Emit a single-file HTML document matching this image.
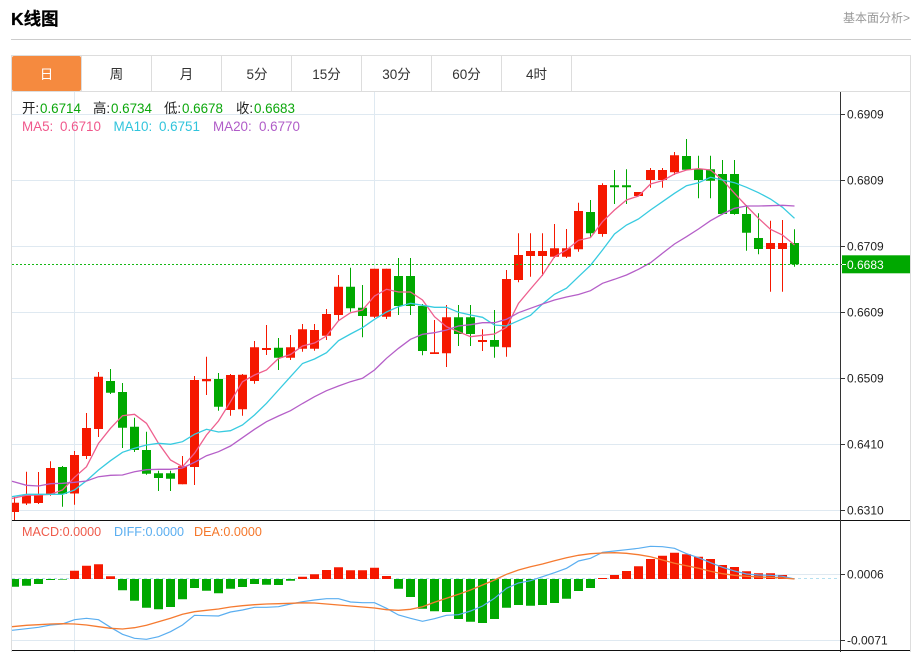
<!DOCTYPE html>
<html><head><meta charset="utf-8"><title>K线图</title>
<style>
html,body{margin:0;padding:0;background:#fff;width:915px;height:652px;overflow:hidden}
svg{display:block;position:absolute;left:0;top:0}
text{font-family:"Liberation Sans","Noto Sans CJK SC",sans-serif}
</style></head><body>
<svg width="915" height="652" viewBox="0 0 915 652" xmlns="http://www.w3.org/2000/svg">
<text x="11" y="25" font-size="17.5" font-weight="700" fill="#000" stroke="#000" stroke-width="0.25">K线图</text>
<text x="843" y="22" font-size="12" fill="#999">基本面分析&gt;</text>
<path d="M11 39.5H911" stroke="#ccc"/>
<!-- frame and tabs -->
<path d="M11.5 55V652M910.5 55V652M11 55.5H911M11 91.5H911" stroke="#ddd" fill="none"/>
<path d="M81.5 56V91M151.5 56V91M221.5 56V91M291.5 56V91M361.5 56V91M431.5 56V91M501.5 56V91M571.5 56V91" stroke="#ddd"/>
<rect x="12" y="56" width="69" height="35" rx="2" fill="#f58a3f"/>
<g font-size="13.5" fill="#333" text-anchor="middle">
<text x="46.5" y="79" fill="#fff">日</text><text x="116.5" y="79">周</text><text x="186.5" y="79">月</text><text x="257" y="79">5分</text><text x="326.5" y="79">15分</text><text x="396.5" y="79">30分</text><text x="466.5" y="79">60分</text><text x="536.5" y="79">4时</text>
</g>
<!-- grid -->
<path d="M12 114.5H841M12 180.5H841M12 246.5H841M12 312.5H841M12 378.5H841M12 444.5H841M12 510.5H841M12 574.5H841M12 640.5H841M74.5 92V652M374.5 92V652" stroke="#dfe9f1" fill="none"/>
<!-- candle wicks -->
<g stroke="#f51800" fill="none"><path d="M14.5 497V520M26.5 471.7V505M38.5 472V504M50.5 461.3V495.7M74.5 451V504.7M86.5 413V459M98.5 372V437M182.5 456V484.3M194.5 376V485M206.5 356.7V395M230.5 374V415.7M242.5 374V415.7M254.5 341V383.7M266.5 325V355M290.5 335V360M302.5 324V351.7M314.5 324V350.7M326.5 309V340M338.5 275V320.7M374.5 268.7V318M386.5 268.7V319M434.5 320V354M446.5 305V367M482.5 329.3V351M506.5 270V356.7M518.5 233.3V282.3M530.5 233.3V276.7M542.5 233.3V276M554.5 224V258M566.5 229V258M578.5 202.7V251.7M602.5 183.3V236.7M650.5 168V187.7M662.5 168V187.7M674.5 152V175M770.5 220.7V291.7M782.5 220V291.7"/></g>
<g stroke="#00a800" fill="none"><path d="M62.5 466V506.7M110.5 369V394M122.5 383V448M134.5 417.7V452M146.5 431.7V474.7M158.5 470.7V491M170.5 470.7V491M218.5 373V410.7M278.5 338V370M350.5 267.7V311.7M362.5 285V337.3M398.5 258V315M410.5 258V315M422.5 304V355.3M458.5 305V346M470.5 305V346M494.5 310V357.7M590.5 200V236.7M614.5 170V204M626.5 169.3V204M686.5 139V170M698.5 155.7V198.3M710.5 155.7V198.3M722.5 160V214.7M734.5 160V214.7M746.5 205V250.7M758.5 213.3V254.3M794.5 229.3V266.7"/></g>
<!-- candle bodies -->
<path fill="#f51800" d="M12 502.7h7V512h-7zM22 495h9V503.5h-9zM34 495h9V503h-9zM46 468h9V494h-9zM70 455h9V493.5h-9zM82 428h9V456h-9zM94 376.7h9V429h-9zM178 466.3h9V484.3h-9zM190 380h9V467h-9zM202 379h9V381.3h-9zM226 375h9V410h-9zM238 374.7h9V409.3h-9zM250 347.3h9V381h-9zM262 348h9V350h-9zM286 347.3h9V357.7h-9zM298 329.3h9V348.7h-9zM310 330h9V348.7h-9zM322 314h9V335.7h-9zM334 286.7h9V315h-9zM370 268.7h9V316.7h-9zM382 268.7h9V316.7h-9zM430 352.3h9V354h-9zM442 317.3h9V353.3h-9zM478 340h9V342h-9zM502 279h9V347.3h-9zM514 255h9V280h-9zM526 251h9V256h-9zM538 251h9V256h-9zM550 248.3h9V256.7h-9zM562 248.3h9V256.7h-9zM574 211h9V249.3h-9zM598 185h9V234h-9zM634 192h9V196h-9zM646 170h9V180h-9zM658 170h9V180h-9zM670 155.3h9V172.3h-9zM766 243h9V249h-9zM778 243h9V249h-9z"/>
<path fill="#00a800" d="M58 467h9V494h-9zM106 381h9V392.7h-9zM118 392h9V427.7h-9zM130 426.7h9V450h-9zM142 450h9V473.7h-9zM154 473.3h9V478h-9zM166 473.3h9V478.7h-9zM214 379h9V406.7h-9zM274 347.7h9V357.7h-9zM346 286.7h9V308.3h-9zM358 307.7h9V316h-9zM394 276h9V306h-9zM406 276h9V306h-9zM418 306h9V351h-9zM454 317.3h9V334h-9zM466 317.3h9V334h-9zM490 340h9V346.7h-9zM586 212h9V233.3h-9zM610 185.3h9V187.3h-9zM622 185.3h9V187.3h-9zM682 156h9V169.7h-9zM694 169.3h9V180h-9zM706 169.3h9V180.7h-9zM718 174h9V214h-9zM730 174h9V214h-9zM742 214h9V232.7h-9zM754 238h9V249h-9zM790 243h9V264.3h-9z"/>
<!-- MA lines -->
<polyline fill="none" stroke="#ee5f8e" stroke-width="1.3" points="12,498.5 26.5,495.3 38.5,495 50.5,494.3 62.5,490 74.5,477.3 86.5,466.7 98.5,443.3 110.5,428.3 122.5,415.7 134.5,414.3 146.5,423.3 158.5,443.3 170.5,460 182.5,466.7 194.5,453.3 206.5,435 218.5,421 230.5,401.7 242.5,381.7 254.5,375 266.5,370 278.5,358.5 290.5,354.5 302.5,346 314.5,343 326.5,336 338.5,320.7 350.5,312.7 362.5,310 374.5,296 386.5,289.3 398.5,292 410.5,292 422.5,300 434.5,316.7 446.5,326.7 458.5,331.7 470.5,336.7 482.5,335.3 494.5,334 506.5,327.3 518.5,303.3 530.5,289 542.5,275 554.5,256.7 566.5,250 578.5,240.3 590.5,237.6 602.5,221.7 614.5,210 626.5,200 638.5,196 650.5,184 662.5,180.7 674.5,174 686.5,170 698.5,168.7 710.5,170 722.5,180 734.5,193.3 746.5,206 758.5,218.3 770.5,229.3 782.5,235 794.5,245"/>
<polyline fill="none" stroke="#38cbe0" stroke-width="1.3" points="12,496.7 26.5,494.3 38.5,494.3 50.5,494.3 62.5,494.3 74.5,490 86.5,480.7 98.5,470 110.5,460.7 122.5,452.3 134.5,448.3 146.5,445 158.5,443.3 170.5,444.3 182.5,441.7 194.5,434.3 206.5,429.3 218.5,432 230.5,430.7 242.5,425 254.5,415 266.5,403.3 278.5,390 290.5,376.7 302.5,363.5 314.5,359 326.5,352.7 338.5,340.7 350.5,334 362.5,327.7 374.5,319.3 386.5,312 398.5,306.7 410.5,303.3 422.5,305.3 434.5,307.3 446.5,307.3 458.5,312.3 470.5,315 482.5,317.3 494.5,325 506.5,326 518.5,320.7 530.5,315.3 542.5,304 554.5,294.3 566.5,288.2 578.5,276.7 590.5,265.3 602.5,250 614.5,234 626.5,225 638.5,219 650.5,210 662.5,201.7 674.5,193.3 686.5,185.7 698.5,182.7 710.5,177.3 722.5,180 734.5,182.7 746.5,187.3 758.5,192.7 770.5,199 782.5,207.3 794.5,218.3"/>
<polyline fill="none" stroke="#b55fc8" stroke-width="1.3" points="12,481.3 26.5,485.3 38.5,486 50.5,483.7 62.5,483.3 74.5,482.3 86.5,481 98.5,476.7 110.5,475.3 122.5,475 134.5,471.7 146.5,469.7 158.5,469.3 170.5,469.3 182.5,468 194.5,462.3 206.5,455.7 218.5,451.7 230.5,446 242.5,437.7 254.5,429.3 266.5,421.7 278.5,416 290.5,410.7 302.5,403.5 314.5,396.7 326.5,390.7 338.5,386 350.5,381.7 362.5,378.3 374.5,370 386.5,358.3 398.5,348.3 410.5,339.3 422.5,334.3 434.5,332.7 446.5,330 458.5,326 470.5,324.7 482.5,322.7 494.5,322.7 506.5,319.3 518.5,312.7 530.5,308.3 542.5,304 554.5,300 566.5,297 578.5,294.5 590.5,290.7 602.5,283.3 614.5,279.3 626.5,275 638.5,269.3 650.5,262.7 662.5,253.3 674.5,244 686.5,236.7 698.5,229 710.5,220.7 722.5,214 734.5,208.3 746.5,206 758.5,206 770.5,205.7 782.5,205.3 794.5,206"/>
<!-- last price dotted -->
<path d="M12 264.5H842" stroke="#14b814" stroke-dasharray="2 2" fill="none"/>
<!-- MACD -->
<path d="M12 578.5H841" stroke="#b5e0f0" stroke-dasharray="3 3" fill="none"/>
<path fill="#00a800" d="M12 579h7V586.7h-7zM22 579h9V585.7h-9zM34 579h9V584h-9zM46 579h9V580h-9zM58 579h9V579.6h-9zM118 579h9V590.3h-9zM130 579h9V600.7h-9zM142 579h9V607.7h-9zM154 579h9V609.3h-9zM166 579h9V607h-9zM178 579h9V599.3h-9zM190 579h9V588h-9zM202 579h9V590.7h-9zM214 579h9V593.3h-9zM226 579h9V588.7h-9zM238 579h9V587h-9zM250 579h9V584h-9zM262 579h9V584.7h-9zM274 579h9V585h-9zM286 579h9V580.7h-9zM394 579h9V588.7h-9zM406 579h9V597h-9zM418 579h9V608.7h-9zM430 579h9V611.3h-9zM442 579h9V612h-9zM454 579h9V619h-9zM466 579h9V621.7h-9zM478 579h9V623h-9zM490 579h9V619h-9zM502 579h9V607.7h-9zM514 579h9V605h-9zM526 579h9V605.7h-9zM538 579h9V605h-9zM550 579h9V603h-9zM562 579h9V598.7h-9zM574 579h9V591h-9zM586 579h9V588h-9z"/>
<path fill="#f51800" d="M70 570.7h9V579h-9zM82 565.7h9V579h-9zM94 564.3h9V579h-9zM106 576.3h9V579h-9zM298 576.7h9V579h-9zM310 574.3h9V579h-9zM322 570h9V579h-9zM334 567.3h9V579h-9zM346 570.3h9V579h-9zM358 570.3h9V579h-9zM370 567.7h9V579h-9zM382 576h9V579h-9zM598 578h9V579h-9zM610 575h9V579h-9zM622 571h9V579h-9zM634 566.3h9V579h-9zM646 559h9V579h-9zM658 555.7h9V579h-9zM670 552.7h9V579h-9zM682 554.3h9V579h-9zM694 556.7h9V579h-9zM706 559h9V579h-9zM718 565h9V579h-9zM730 567h9V579h-9zM742 571.3h9V579h-9zM754 573.3h9V579h-9zM766 573.3h9V579h-9zM778 575h9V579h-9z"/>
<polyline fill="none" stroke="#5aaef0" stroke-width="1.2" points="12,630.3 26.5,628.7 38.5,627.3 50.5,625 62.5,624 74.5,619.7 86.5,618.3 98.5,619.7 110.5,627.3 122.5,634.3 134.5,638.3 146.5,639.3 158.5,636.7 170.5,631.7 182.5,625 194.5,615.3 206.5,615.7 218.5,616 230.5,612 242.5,610 254.5,607.3 266.5,607.3 278.5,606.7 290.5,604 302.5,601.7 314.5,600 326.5,598.7 338.5,598.7 350.5,602 362.5,602.7 374.5,602.7 386.5,608.3 398.5,615 410.5,618.3 422.5,621.3 434.5,618.7 446.5,615.3 458.5,614.7 470.5,611 482.5,606 494.5,598.3 506.5,588.3 518.5,583 530.5,580.7 542.5,576.7 554.5,572.7 566.5,568.3 578.5,561 590.5,558.3 602.5,552.3 614.5,551 626.5,549.7 638.5,548.3 650.5,546.3 662.5,546.7 674.5,548.3 686.5,553.7 698.5,557.7 710.5,562.7 722.5,567.3 734.5,571 746.5,574 758.5,575 770.5,575.3 782.5,576.3 794.5,579"/>
<polyline fill="none" stroke="#f57a30" stroke-width="1.3" points="12,626.7 26.5,625.3 38.5,624.7 50.5,624 62.5,623.7 74.5,624 86.5,625 98.5,626.7 110.5,628.3 122.5,629 134.5,627.7 146.5,625.3 158.5,621.7 170.5,618.3 182.5,614.3 194.5,611.7 206.5,610.3 218.5,609 230.5,607 242.5,605.7 254.5,604.7 266.5,604 278.5,603.7 290.5,603.3 302.5,602.8 314.5,603 326.5,604 338.5,605 350.5,606 362.5,607 374.5,608 386.5,609.7 398.5,610.3 410.5,609.3 422.5,606.7 434.5,602.3 446.5,598.3 458.5,594.3 470.5,590 482.5,585 494.5,580 506.5,574.3 518.5,570 530.5,566.7 542.5,564 554.5,560.7 566.5,557.7 578.5,555.3 590.5,553.7 602.5,553 614.5,552.7 626.5,553.3 638.5,554.7 650.5,556.7 662.5,560 674.5,563.3 686.5,565.7 698.5,568.3 710.5,571.3 722.5,573.7 734.5,575.3 746.5,576.3 758.5,577 770.5,577.3 782.5,578 794.5,579"/>
<!-- dark rules -->
<path d="M12 520.5H910M12 650.5H910" stroke="#111" fill="none"/>
<path d="M840.5 92V652" stroke="#333" fill="none"/>
<path d="M841 114.5h4M841 180.5h4M841 246.5h4M841 312.5h4M841 378.5h4M841 444.5h4M841 510.5h4M841 574.5h4M841 640.5h4" stroke="#333" fill="none"/>
<!-- price tag -->
<rect x="842" y="255.3" width="68" height="18" fill="#00a800"/>
<path d="M842 264.5h4" stroke="#fff"/>
<text x="847" y="269" font-size="12" fill="#fff">0.6683</text>
<!-- axis labels -->
<g font-size="12" fill="#222">
<text x="847" y="118.5">0.6909</text><text x="847" y="184.5">0.6809</text><text x="847" y="250.5">0.6709</text><text x="847" y="316.5">0.6609</text><text x="847" y="382.5">0.6509</text><text x="847" y="448.5">0.6410</text><text x="847" y="514.5">0.6310</text><text x="847" y="578.5">0.0006</text><text x="847" y="644.5">-0.0071</text>
</g>
<!-- legends -->
<g font-size="13.4">
<text x="22" y="113" fill="#222">开:</text><text x="40" y="113" fill="#0ca70c">0.6714</text>
<text x="93" y="113" fill="#222">高:</text><text x="111" y="113" fill="#0ca70c">0.6734</text>
<text x="164" y="113" fill="#222">低:</text><text x="182" y="113" fill="#0ca70c">0.6678</text>
<text x="236" y="113" fill="#222">收:</text><text x="254" y="113" fill="#0ca70c">0.6683</text>
<text x="22" y="131" fill="#f0588c">MA5:</text><text x="60" y="131" fill="#f0588c">0.6710</text>
<text x="113.5" y="131" fill="#30c4dc">MA10:</text><text x="159" y="131" fill="#30c4dc">0.6751</text>
<text x="213" y="131" fill="#b05cc8">MA20:</text><text x="259" y="131" fill="#b05cc8">0.6770</text>
</g>
<g font-size="12.6">
<text x="22" y="536" fill="#ef5a4a">MACD:0.0000</text>
<text x="114" y="536" fill="#5aaef0">DIFF:0.0000</text>
<text x="194" y="536" fill="#f5772a">DEA:0.0000</text>
</g>
</svg>
</body></html>
